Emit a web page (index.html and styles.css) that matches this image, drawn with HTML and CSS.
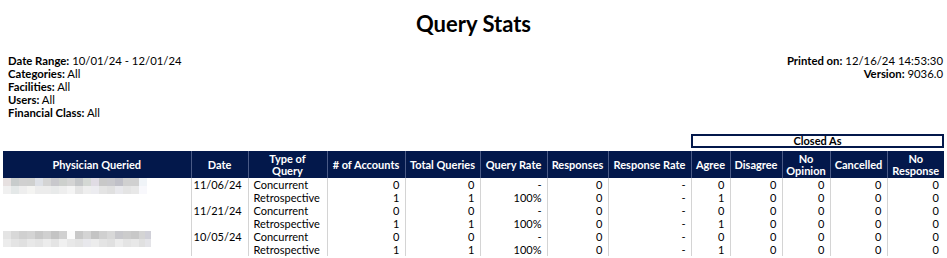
FILE: index.html
```html
<!DOCTYPE html>
<html lang="en">
<head>
<meta charset="utf-8">
<title>Query Stats</title>
<link rel="stylesheet" href="styles.css">
</head>
<body>
<div class="page">
  <h1 class="title">Query Stats</h1>
  <div class="info">
    <div class="info-left">
      <div><b>Date Range:</b> 10/01/24 - 12/01/24</div>
      <div><b>Categories:</b> All</div>
      <div><b>Facilities:</b> All</div>
      <div><b>Users:</b> All</div>
      <div><b>Financial Class:</b> All</div>
    </div>
    <div class="info-right">
      <div><b>Printed on:</b> 12/16/24 14:53:30</div>
      <div><b>Version:</b> 9036.0</div>
    </div>
  </div>
  <div class="closed-wrap"><div class="closed-box">Closed As</div></div>
  <table class="stats">
    <colgroup>
      <col class="c-phys"><col class="c-date"><col class="c-type"><col class="c-acc"><col class="c-tot"><col class="c-qr"><col class="c-resp"><col class="c-rr"><col class="c-agree"><col class="c-dis"><col class="c-noop"><col class="c-canc"><col class="c-nores">
    </colgroup>
    <thead>
      <tr>
        <th>Physician Queried</th>
        <th>Date</th>
        <th>Type of<br>Query</th>
        <th># of Accounts</th>
        <th>Total Queries</th>
        <th>Query Rate</th>
        <th>Responses</th>
        <th>Response Rate</th>
        <th>Agree</th>
        <th>Disagree</th>
        <th>No<br>Opinion</th>
        <th>Cancelled</th>
        <th>No<br>Response</th>
      </tr>
    </thead>
    <tbody>
      <tr>
        <td class="phys" rowspan="2"><div class="mosaic m1"></div></td>
        <td class="date">11/06/24</td><td class="type">Concurrent</td>
        <td>0</td><td>0</td><td>-</td><td>0</td><td>-</td><td>0</td><td>0</td><td>0</td><td>0</td><td>0</td>
      </tr>
      <tr>
        <td class="date"></td><td class="type">Retrospective</td>
        <td>1</td><td>1</td><td>100%</td><td>0</td><td>-</td><td>1</td><td>0</td><td>0</td><td>0</td><td>0</td>
      </tr>
      <tr>
        <td class="phys" rowspan="2"></td>
        <td class="date">11/21/24</td><td class="type">Concurrent</td>
        <td>0</td><td>0</td><td>-</td><td>0</td><td>-</td><td>0</td><td>0</td><td>0</td><td>0</td><td>0</td>
      </tr>
      <tr>
        <td class="date"></td><td class="type">Retrospective</td>
        <td>1</td><td>1</td><td>100%</td><td>0</td><td>-</td><td>1</td><td>0</td><td>0</td><td>0</td><td>0</td>
      </tr>
      <tr>
        <td class="phys" rowspan="2"><div class="mosaic m3"></div></td>
        <td class="date">10/05/24</td><td class="type">Concurrent</td>
        <td>0</td><td>0</td><td>-</td><td>0</td><td>-</td><td>0</td><td>0</td><td>0</td><td>0</td><td>0</td>
      </tr>
      <tr>
        <td class="date"></td><td class="type">Retrospective</td>
        <td>1</td><td>1</td><td>100%</td><td>0</td><td>-</td><td>1</td><td>0</td><td>0</td><td>0</td><td>0</td>
      </tr>
    </tbody>
  </table>
</div>
</body>
</html>
```
FILE: styles.css
```css
* { box-sizing: border-box; }
html, body { margin: 0; padding: 0; background: #fff; }
body {
  font-family: Lato, "Open Sans", "Liberation Sans", sans-serif;
  color: #000;
}
.page { padding: 0 3px; }
.title {
  margin: 11px 0 0;
  font-size: 22px;
  line-height: 26px;
  font-weight: 700;
  text-align: center;
}
.info {
  display: flex;
  justify-content: space-between;
  margin-top: 17px;
  padding: 0 1px 0 5px;
  font-size: 11.33px;
  line-height: 13px;
}
.info b { font-weight: 700; }
.info-right { text-align: right; }
.closed-wrap {
  display: flex;
  justify-content: flex-end;
  margin-top: 15px;
}
.closed-box {
  width: 253px;
  height: 14px;
  border: 2px solid #03184b;
  font-size: 11px;
  line-height: 10px;
  font-weight: 700;
  text-align: center;
}
.stats {
  margin-top: 3px;
  width: 941px;
  table-layout: fixed;
  border-collapse: collapse;
  font-size: 11px;
}
.c-phys { width: 188px; }
.c-date { width: 57px; }
.c-type { width: 79px; }
.c-acc { width: 78px; }
.c-tot { width: 75px; }
.c-qr { width: 67px; }
.c-resp { width: 61px; }
.c-rr { width: 83px; }
.c-agree { width: 39px; }
.c-dis { width: 52px; }
.c-noop { width: 48px; }
.c-canc { width: 57px; }
.c-nores { width: 57px; }
.stats th {
  background: #03184b;
  color: #fff;
  font-weight: 700;
  height: 27px;
  padding: 0 1px;
  line-height: 12px;
  text-align: center;
  vertical-align: middle;
  border-left: 1px solid #4a5a86;
  white-space: nowrap;
}
.stats th:first-child { border-left: none; }
.stats td {
  height: 13px;
  line-height: 13px;
  padding: 0 5px 0 0;
  text-align: right;
  border-left: 1px solid #d4d4d4;
  white-space: nowrap;
  vertical-align: top;
}
.stats td.phys {
  border-left: none;
  padding: 0;
  text-align: left;
}
.stats td.date { text-align: left; padding-left: 2px; }
.stats td.type { text-align: left; padding-left: 5px; }
.mosaic { height: 16px; background-repeat: no-repeat; background-size: 100% 8px; background-position: 0 0, 0 8px; }
.m1 {
  width: 144px;
  background-image:
    linear-gradient(to right, #e6e0e0 0 8px, #c8cccc 8px 16px, #d0d0d0 16px 24px, #cfd0cf 24px 32px, #dde0e6 32px 40px, #d4d4d4 40px 48px, #c8c8cc 48px 56px, #cdd0cd 56px 64px, #d4d4d4 64px 72px, #c4c6c8 72px 80px, #d4d8d4 80px 88px, #e0dce4 88px 96px, #c8c8c8 96px 104px, #c8c8cc 104px 112px, #c0c0c8 112px 120px, #d0d0d0 120px 128px, #d0d0d0 128px 136px, #f0f4f8 136px 144px),
    linear-gradient(to right, #f0f0f0 0 8px, #e4e8e8 8px 16px, #eeeeee 16px 24px, #f4f4f2 24px 32px, #ececec 32px 40px, #ececec 40px 48px, #e8eaea 48px 56px, #eeeeee 56px 64px, #f4f4f4 64px 72px, #e4e4e4 72px 80px, #eeeeee 80px 88px, #ececf0 88px 96px, #e4e4e4 96px 104px, #e0e0e0 104px 112px, #e8e8ec 112px 120px, #e4e4e4 120px 128px, #e8e8e8 128px 136px, #f8f8fc 136px 144px);
}
.m3 {
  width: 148px;
  margin-top: 1px;
  background-image:
    linear-gradient(to right, #e4e4e4 0 8px, #d8d8d8 8px 16px, #d0d0d0 16px 24px, #d4d4d4 24px 32px, #c8c8c8 32px 40px, #d0d0d0 40px 48px, #c4c4c4 48px 56px, #d0d0d0 56px 64px, #fcfcfc 64px 72px, #c8c8c8 72px 80px, #d4d4d4 80px 88px, #c4c4c4 88px 96px, #d0d0d0 96px 104px, #d8d8d8 104px 112px, #c8c8cc 112px 120px, #cccccc 120px 128px, #c8c8c8 128px 136px, #d4d4d4 136px 142px, #d0d0d8 142px 148px),
    linear-gradient(to right, #ececec 0 8px, #e4e4e4 8px 16px, #e0e0e0 16px 24px, #e8e8e8 24px 32px, #e4e4e4 32px 40px, #ececec 40px 48px, #e4e4e4 48px 56px, #f0f0f0 56px 64px, #e8e8e8 64px 72px, #e4e4e4 72px 80px, #e8e8ec 80px 88px, #ececec 88px 96px, #e4e4e4 96px 104px, #e0e0e0 104px 112px, #ececec 112px 120px, #e4e4e4 120px 128px, #e8e8e8 128px 136px, #e0e0e0 136px 142px, #e4e4e8 142px 148px);
}
```
